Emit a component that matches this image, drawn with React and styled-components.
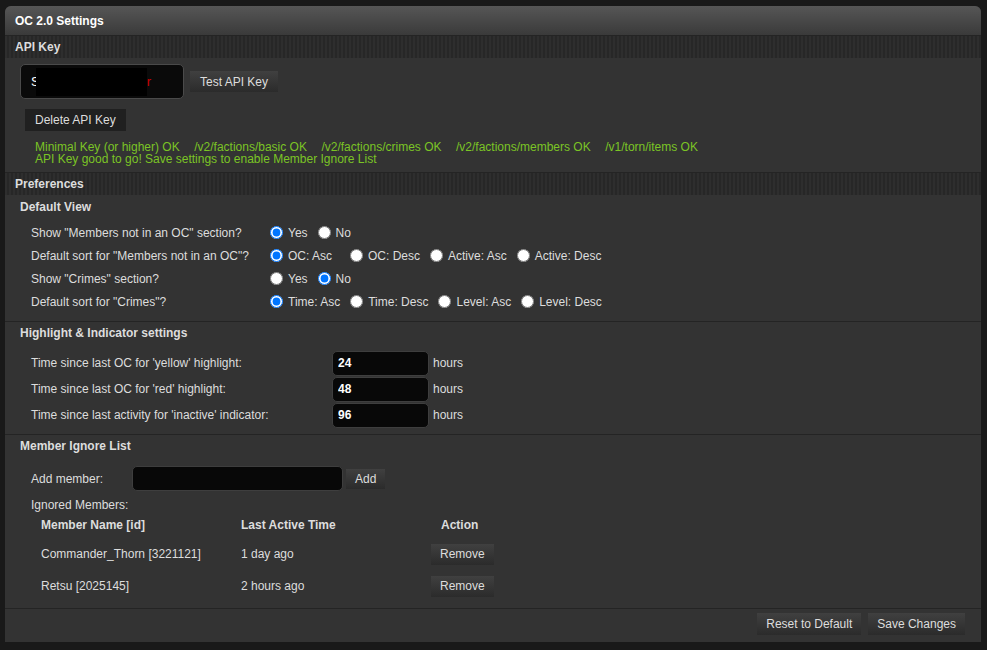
import React, { useState } from "react";
import styled, { createGlobalStyle } from "styled-components";

const GlobalStyle = createGlobalStyle`
  html, body {
    margin: 0;
    background: #191919;
  }
  body {
    font-family: "Liberation Sans", Arial, sans-serif;
    font-size: 12px;
    color: #ddd;
  }
`;

const Page = styled.div`
  padding: 6px 6px 0 5px;
`;

const Panel = styled.div`
  background: #333;
  border-radius: 6px 6px 0 0;
  padding-bottom: 7px;
  overflow: hidden;
`;

const Title = styled.div`
  height: 29px;
  line-height: 30px;
  padding-left: 10px;
  font-weight: bold;
  color: #fff;
  background: linear-gradient(#565656, #3a3a3a);
  border-bottom: 1px solid #242424;
`;

const SectionBar = styled.div`
  height: 22px;
  line-height: 22px;
  padding-left: 10px;
  font-weight: bold;
  color: #ddd;
  background: repeating-linear-gradient(
    90deg,
    #2e2e2e 0 2px,
    #272727 2px 4px
  );
  border-top: ${(p) => (p.$topLine ? "1px solid #242424" : "none")};
`;

const ApiBlock = styled.div`
  padding: 6px 15px 7px 15px;
`;

const KeyRow = styled.div`
  display: flex;
  align-items: center;
  gap: 6px;
`;

const KeyField = styled.div`
  box-sizing: border-box;
  width: 164px;
  height: 35px;
  background: #0a0a0a;
  border: 1px solid #4a4a4a;
  border-radius: 5px;
  display: flex;
  align-items: center;
  padding-left: 10px;
  color: #fff;
  font-size: 13px;
`;

const Redact = styled.span`
  display: inline-block;
  width: 111px;
  height: 28px;
  margin-left: -4px;
  background: #000;
`;

const RedChar = styled.span`
  color: #c00;
  margin-left: 0;
`;

const Button = styled.button`
  font-family: inherit;
  font-size: 12px;
  color: #ddd;
  border: none;
  height: ${(p) => p.$h || 21}px;
  padding: 0 ${(p) => p.$px || 10}px;
  background: ${(p) =>
    p.$flat ? "#202020" : "linear-gradient(#404040, #2b2b2b)"};
  cursor: pointer;
`;

const DeleteWrap = styled.div`
  margin: 10px 0 0 5px;
`;

const StatusLines = styled.div`
  margin: 10px 0 0 15px;
  color: #7bc425;
  line-height: 12px;
`;

const StatusItem = styled.span`
  margin-right: 14.5px;
`;

const SubSection = styled.div`
  padding: ${(p) => p.$pad || "5px 15px 8px 15px"};
  border-bottom: ${(p) => (p.$line ? "1px solid #242424" : "none")};
`;

const SubHeading = styled.div`
  font-weight: bold;
  color: #ddd;
  line-height: 14px;
`;

const OptionGrid = styled.div`
  display: grid;
  grid-template-columns: 239px auto;
  grid-auto-rows: 23px;
  align-items: center;
  margin: 7px 0 0 11px;
`;

const RadioGroup = styled.div`
  display: flex;
  align-items: center;
`;

const RadioLabel = styled.label`
  display: flex;
  align-items: center;
  margin-right: ${(p) => p.$gap || 10}px;
  color: #ddd;
`;

const Radio = styled.input`
  width: 13px;
  height: 13px;
  margin: 0 5px 0 0;
`;

const HourGrid = styled.div`
  display: grid;
  grid-template-columns: 301px 97px auto;
  grid-auto-rows: 26px;
  align-items: center;
  margin: 10px 0 0 11px;
`;

const DarkInput = styled.input`
  box-sizing: border-box;
  height: 25px;
  width: ${(p) => p.$w || 97}px;
  background: #080808;
  border: 1px solid #3e3e3e;
  border-radius: 5px;
  color: #fff;
  font-family: inherit;
  font-size: 12px;
  font-weight: ${(p) => (p.$bold ? "bold" : "normal")};
  padding: 0 5px;
  outline: none;
`;

const Unit = styled.span`
  margin-left: 4px;
`;

const AddRow = styled.div`
  display: flex;
  align-items: center;
  margin: 13px 0 0 11px;
`;

const AddLabel = styled.span`
  width: 101px;
`;

const AddButton = styled(Button)`
  margin-left: 3px;
`;

const IgnoredLabel = styled.div`
  margin: 7px 0 0 11px;
  line-height: 14px;
`;

const Table = styled.div`
  display: grid;
  grid-template-columns: 200px 190px 64px;
  margin: 0 0 0 21px;
  align-items: center;
`;

const Th = styled.div`
  font-weight: bold;
  height: 26px;
  line-height: 26px;
  margin-left: ${(p) => p.$indent || 0}px;
`;

const Td = styled.div`
  height: 32px;
  display: flex;
  align-items: center;
`;

const Footer = styled.div`
  display: flex;
  justify-content: flex-end;
  gap: 7px;
  padding: 4px 16px 0 0;
`;

const sections = [
  {
    label: 'Show "Members not in an OC" section?',
    name: "showMembers",
    options: ["Yes", "No"],
    checked: "Yes",
  },
  {
    label: 'Default sort for "Members not in an OC"?',
    name: "sortMembers",
    options: ["OC: Asc", "OC: Desc", "Active: Asc", "Active: Desc"],
    checked: "OC: Asc",
  },
  {
    label: 'Show "Crimes" section?',
    name: "showCrimes",
    options: ["Yes", "No"],
    checked: "No",
  },
  {
    label: 'Default sort for "Crimes"?',
    name: "sortCrimes",
    options: ["Time: Asc", "Time: Desc", "Level: Asc", "Level: Desc"],
    checked: "Time: Asc",
  },
];

const hourSettings = [
  { label: "Time since last OC for 'yellow' highlight:", value: "24" },
  { label: "Time since last OC for 'red' highlight:", value: "48" },
  { label: "Time since last activity for 'inactive' indicator:", value: "96" },
];

const ignored = [
  { name: "Commander_Thorn [3221121]", last: "1 day ago" },
  { name: "Retsu [2025145]", last: "2 hours ago" },
];

const statuses = [
  "Minimal Key (or higher) OK",
  "/v2/factions/basic OK",
  "/v2/factions/crimes OK",
  "/v2/factions/members OK",
  "/v1/torn/items OK",
];

export default function App() {
  const [prefs, setPrefs] = useState(
    Object.fromEntries(sections.map((s) => [s.name, s.checked]))
  );

  return (
    <Page>
      <GlobalStyle />
      <Panel>
        <Title>OC 2.0 Settings</Title>
        <SectionBar>API Key</SectionBar>
        <ApiBlock>
          <KeyRow>
            <KeyField>
              S<Redact />
              <RedChar>r</RedChar>
            </KeyField>
            <Button $px={10}>Test API Key</Button>
          </KeyRow>
          <DeleteWrap>
            <Button $flat $h={22}>
              Delete API Key
            </Button>
          </DeleteWrap>
          <StatusLines>
            <div>
              {statuses.map((s) => (
                <StatusItem key={s}>{s}</StatusItem>
              ))}
            </div>
            <div>API Key good to go! Save settings to enable Member Ignore List</div>
          </StatusLines>
        </ApiBlock>
        <SectionBar $topLine>Preferences</SectionBar>

        <SubSection $line>
          <SubHeading>Default View</SubHeading>
          <OptionGrid>
            {sections.map((s) => (
              <React.Fragment key={s.name}>
                <span>{s.label}</span>
                <RadioGroup>
                  {s.options.map((o) => (
                    <RadioLabel key={o} $gap={o === "OC: Asc" ? 18 : 10}>
                      <Radio
                        type="radio"
                        name={s.name}
                        checked={prefs[s.name] === o}
                        onChange={() => setPrefs({ ...prefs, [s.name]: o })}
                      />
                      {o}
                    </RadioLabel>
                  ))}
                </RadioGroup>
              </React.Fragment>
            ))}
          </OptionGrid>
        </SubSection>

        <SubSection $line $pad="4px 15px 6px 15px">
          <SubHeading>Highlight &amp; Indicator settings</SubHeading>
          <HourGrid>
            {hourSettings.map((h) => (
              <React.Fragment key={h.label}>
                <span>{h.label}</span>
                <DarkInput $bold defaultValue={h.value} />
                <Unit>hours</Unit>
              </React.Fragment>
            ))}
          </HourGrid>
        </SubSection>

        <SubSection $line $pad="4px 15px 6px 15px">
          <SubHeading>Member Ignore List</SubHeading>
          <AddRow>
            <AddLabel>Add member:</AddLabel>
            <DarkInput $w={211} />
            <AddButton $h={20} $px={9}>
              Add
            </AddButton>
          </AddRow>
          <IgnoredLabel>Ignored Members:</IgnoredLabel>
          <Table>
            <Th>Member Name [id]</Th>
            <Th>Last Active Time</Th>
            <Th $indent={10}>Action</Th>
            {ignored.map((m) => (
              <React.Fragment key={m.name}>
                <Td>{m.name}</Td>
                <Td>{m.last}</Td>
                <Td>
                  <Button $px={9}>Remove</Button>
                </Td>
              </React.Fragment>
            ))}
          </Table>
        </SubSection>

        <Footer>
          <Button $h={22} $px={9}>
            Reset to Default
          </Button>
          <Button $h={22} $px={9}>
            Save Changes
          </Button>
        </Footer>
      </Panel>
    </Page>
  );
}
